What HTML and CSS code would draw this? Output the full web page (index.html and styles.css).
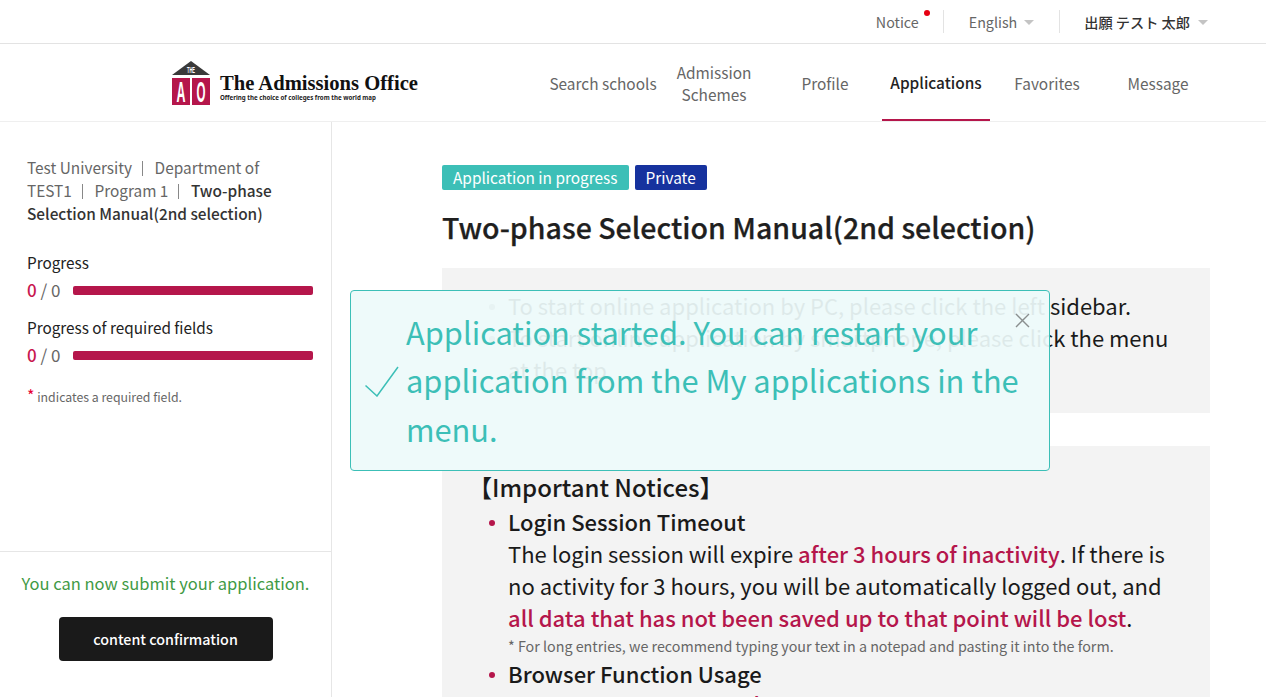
FILE: index.html
```html
<!DOCTYPE html>
<html lang="en">
<head>
<meta charset="utf-8">
<title>Applications</title>
<link rel="stylesheet" href="styles.css">
</head>
<body>
<div class="page">
  <div class="topbar">
    <a class="top-item notice">Notice<span class="dot"></span></a>
    <span class="sep"></span>
    <a class="top-item lang">English<span class="caret"></span></a>
    <span class="sep"></span>
    <a class="top-item user">出願 テスト 太郎<span class="caret"></span></a>
  </div>
  <header class="header">
    <div class="logo">
      <svg class="logo-mark" width="38" height="44" viewBox="0 0 38 44">
        <polygon points="19,0 38,14 0,14" fill="#3a3a3a"/>
        <text x="19" y="12" class="logo-the" textLength="8" lengthAdjust="spacingAndGlyphs">THE</text>
        <rect x="0" y="17" width="18" height="27" fill="#b5164b"/>
        <rect x="20" y="17" width="18" height="27" fill="#b5164b"/>
        <text x="9" y="41" class="logo-letter" textLength="9" lengthAdjust="spacingAndGlyphs">A</text>
        <text x="29" y="41" class="logo-letter" textLength="9" lengthAdjust="spacingAndGlyphs">O</text>
      </svg>
      <div class="logo-text">
        <div class="logo-title">The Admissions Office</div>
        <div class="logo-sub">Offering the choice of colleges from the world map</div>
      </div>
    </div>
    <nav class="nav">
      <a class="nav-item">Search schools</a>
      <a class="nav-item">Admission Schemes</a>
      <a class="nav-item">Profile</a>
      <a class="nav-item active">Applications</a>
      <a class="nav-item">Favorites</a>
      <a class="nav-item">Message</a>
    </nav>
  </header>
  <div class="body">
    <aside class="sidebar">
      <div class="side-top">
        <p class="crumbs">Test University<span class="bar"></span>Department of TEST1<span class="bar"></span>Program 1<span class="bar"></span><b>Two-phase Selection Manual(2nd selection)</b></p>
        <div class="progress first">
          <div class="p-label">Progress</div>
          <div class="p-row"><span class="p-num"><em>0</em> / 0</span><span class="p-bar"></span></div>
        </div>
        <div class="progress">
          <div class="p-label">Progress of required fields</div>
          <div class="p-row"><span class="p-num"><em>0</em> / 0</span><span class="p-bar"></span></div>
        </div>
        <p class="req"><span class="star">*</span> indicates a required field.</p>
      </div>
      <div class="side-foot">
        <p class="ready">You can now submit your application.</p>
        <button class="confirm">content confirmation</button>
      </div>
    </aside>
    <main class="main">
      <div class="tags"><span class="tag teal">Application in progress</span><span class="tag blue">Private</span></div>
      <h1 class="title">Two-phase Selection Manual(2nd selection)</h1>
      <section class="box box-a">
        <ul class="list">
          <li>To start online application by PC, please click the left sidebar.</li>
          <li>To start online application by smartphone, please click the menu at the top.</li>
        </ul>
      </section>
      <section class="box box-b">
        <h2 class="notice-h">【Important Notices】</h2>
        <ul class="list red-dots">
          <li><strong>Login Session Timeout</strong><br>The login session will expire <span class="hl">after 3 hours of inactivity</span>. If there is no activity for 3 hours, you will be automatically logged out, and <span class="hl">all data that has not been saved up to that point will be lost</span>.
            <small class="fine">* For long entries, we recommend typing your text in a notepad and pasting it into the form.</small></li>
          <li><strong>Browser Function Usage</strong><div class="next">Don't use the browser's <span class="hl"><span class="tick">b</span>ack button</span></div></li>
        </ul>
      </section>
    </main>
  </div>
  <div class="toast">
    <svg class="toast-check" width="36" height="32" viewBox="0 0 36 32"><path d="M0.5 20.5 L12 31 L33 2" fill="none" stroke="#3cbfb7" stroke-width="1.5"/></svg>
    <p class="toast-msg">Application started. You can restart your application from the My applications in the menu.</p>
    <svg class="toast-close" width="15" height="15" viewBox="0 0 15 15"><path d="M1 1 L14 14 M14 1 L1 14" stroke="#8a8f8f" stroke-width="1.4" fill="none"/></svg>
  </div>
</div>
</body>
</html>
```
FILE: styles.css
```css
* { box-sizing: border-box; }
html, body { margin: 0; padding: 0; height: 100%; overflow: hidden; background: #fff; }
body { font-family: "Noto Sans CJK JP", "Noto Sans", sans-serif; color: #1a1a1a; }
.page { position: relative; width: 1266px; height: 697px; overflow: hidden; }

.topbar { height: 44px; display: flex; align-items: center; justify-content: flex-end; border-bottom: 1px solid #e3e3e3; padding-right: 58px; font-size: 14.3px; color: #666; }
.top-item { position: relative; display: flex; align-items: center; line-height: 20px; }
.sep { width: 1px; height: 23px; background: #e3e3e3; margin: 0 24.5px; }
.dot { position: absolute; right: -11px; top: -2px; width: 6px; height: 6px; border-radius: 50%; background: #e60012; }
.caret { width: 0; height: 0; margin-left: 8px; margin-top: 2px; border-left: 5px solid transparent; border-right: 5px solid transparent; border-top: 5px solid #c4c4c4; }
.lang .caret { margin-left: 7px; }
.user { color: #333; font-weight: 500; font-size: 14.2px; }

.header { height: 78px; display: flex; align-items: stretch; border-bottom: 1px solid #efefef; padding-left: 172px; }
.logo { display: flex; align-items: flex-start; gap: 10px; width: 377px; padding-top: 17px; }
.logo-mark { display: block; }
.logo-the { font: 700 8.5px "Liberation Sans", sans-serif; fill: #fff; text-anchor: middle; }
.logo-letter { font: 700 30px "Liberation Sans", sans-serif; fill: #fff; text-anchor: middle; }
.logo-title { font: 700 20.6px/20px "Liberation Serif", serif; color: #111; margin-top: 12px; white-space: nowrap; }
.logo-sub { font: 700 6.15px/8px "Noto Sans", sans-serif; color: #222; white-space: nowrap; margin-top: 1px; }
.nav { display: flex; align-items: stretch; gap: 3px; }
.nav-item { width: 108px; padding-top: 3px; display: flex; align-items: center; justify-content: center; text-align: center; font-size: 15.4px; line-height: 22px; color: #666; border-bottom: 2px solid transparent; }
.nav-item.active { color: #222; font-weight: 500; border-bottom-color: #b5164b; padding-top: 0; }

.body { display: flex; height: 575px; }
.sidebar { width: 332px; flex: none; border-right: 1px solid #e6e6e6; display: flex; flex-direction: column; }
.side-top { height: 429px; padding: 34px 18px 0 27px; }
.crumbs { margin: 0; max-width: 248px; font-size: 15.4px; line-height: 23px; color: #666; }
.crumbs b { font-weight: 500; color: #333; }
.bar { display: inline-block; width: 1px; height: 15px; background: #888; margin: 0 11.5px 0 10px; vertical-align: -2px; }
.progress { margin-top: 15px; }
.progress.first { margin-top: 26px; }
.p-label { font-size: 15.3px; line-height: 22px; color: #222; }
.p-row { display: flex; align-items: center; height: 22px; margin-top: 6px; }
.p-num { width: 46px; font-size: 17px; color: #666; line-height: 22px; }
.p-num em { font-style: normal; font-weight: 500; color: #c8174f; }
.p-bar { width: 241px; height: 9px; border-radius: 2px; background: #b5164b; }
.req { margin: 18px 0 0; font-size: 12.3px; line-height: 22px; color: #666; }
.star { color: #e60033; font-size: 16px; }
.side-foot { border-top: 1px solid #e6e6e6; flex: 1; display: flex; flex-direction: column; align-items: center; padding-top: 19px; }
.ready { margin: 0; font-size: 16.5px; line-height: 24px; color: #3f9a45; }
.confirm { margin-top: 22px; width: 214px; height: 44px; padding: 0 0 2px; border: 0; border-radius: 4px; background: #1a1a1a; color: #fff; font: 500 14.3px "Noto Sans CJK JP", sans-serif; }

.main { flex: 1; padding: 43px 56px 0 110px; }
.tags { display: flex; gap: 6px; }
.tag { height: 25px; font-size: 15.4px; line-height: 25px; color: #fff; padding: 0 11px; border-radius: 2px; }
.teal { background: #3cbfb7; }
.blue { background: #16329e; }
.title { margin: 18px 0 0; font-size: 28.55px; line-height: 38px; font-weight: 500; color: #1f1f1f; white-space: nowrap; -webkit-text-stroke: .25px #1f1f1f; }
.box { background: #f3f3f3; }
.box-a { margin-top: 22px; height: 145px; padding: 21px 36px 0 35px; }
.box-b { margin-top: 33px; height: 300px; padding: 25px 36px 0 31px; }
.notice-h { margin: 0 0 2px -5px; font-size: 24px; line-height: 32px; font-weight: 500; color: #1a1a1a; }
.list { margin: 0; padding: 0 0 0 31px; font-size: 22px; line-height: 32px; list-style: none; }
.box-b .list { padding-left: 35px; }
.list li { position: relative; }
.list li::before { content: ""; position: absolute; left: -19px; top: 15px; width: 6px; height: 6px; border-radius: 50%; background: #999; }
.red-dots li::before { background: #b5164b; }
.list strong { font-weight: 500; }
.hl { color: #b5164b; font-weight: 500; }
.fine { display: block; padding-top: 2px; font-size: 14.3px; line-height: 22px; color: #666; }
.next { margin-top: -2px; white-space: nowrap; }
.tick { vertical-align: 3px; }

.toast { position: absolute; left: 350px; top: 290px; width: 700px; height: 181px; display: flex; align-items: center; border: 1px solid #3cbfb7; border-radius: 4px; background: rgba(237, 250, 250, .93); padding-left: 14px; }
.toast-check { flex: none; }
.toast-msg { margin: 0; padding-left: 5px; width: 625px; font-size: 30.8px; line-height: 48.5px; color: #3cbfb7; }
.toast-close { position: absolute; right: 19px; top: 22px; }
```
